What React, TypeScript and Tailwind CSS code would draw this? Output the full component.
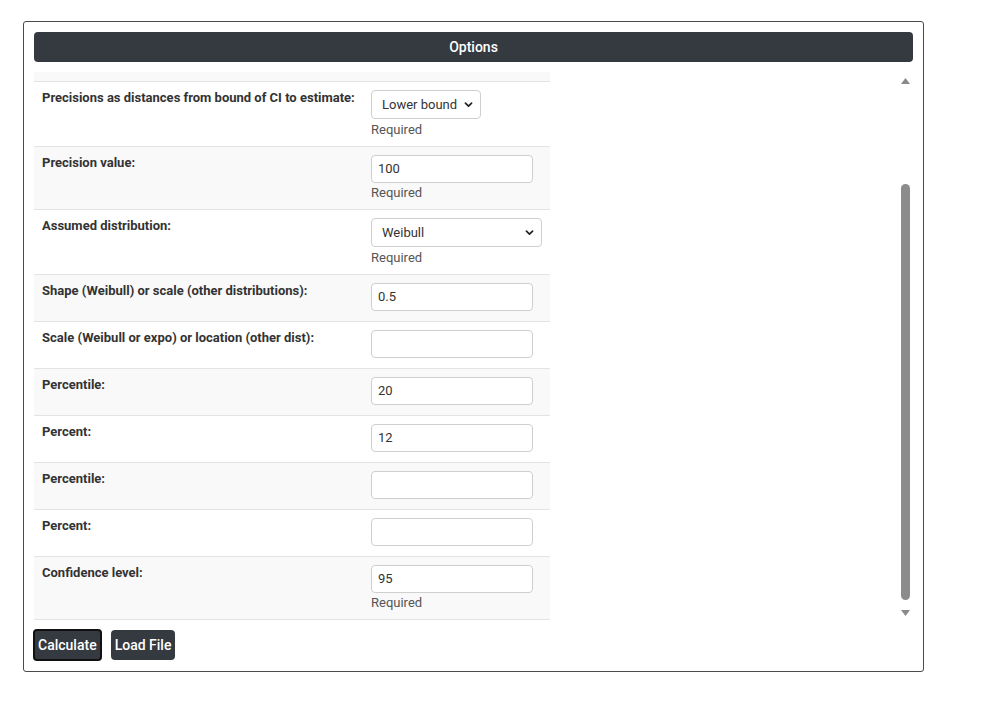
import React from 'react';

type Row = {
  label: string;
  kind: 'input' | 'select';
  value?: string;
  required?: boolean;
  selectWidth?: string;
};

const rows: Row[] = [
  { label: 'Precisions as distances from bound of CI to estimate:', kind: 'select', value: 'Lower bound', required: true, selectWidth: 'w-[110px]' },
  { label: 'Precision value:', kind: 'input', value: '100', required: true },
  { label: 'Assumed distribution:', kind: 'select', value: 'Weibull', required: true, selectWidth: 'w-[171px]' },
  { label: 'Shape (Weibull) or scale (other distributions):', kind: 'input', value: '0.5' },
  { label: 'Scale (Weibull or expo) or location (other dist):', kind: 'input', value: '' },
  { label: 'Percentile:', kind: 'input', value: '20' },
  { label: 'Percent:', kind: 'input', value: '12' },
  { label: 'Percentile:', kind: 'input', value: '' },
  { label: 'Percent:', kind: 'input', value: '' },
  { label: 'Confidence level:', kind: 'input', value: '95', required: true },
];

function Chevron() {
  return (
    <svg width="9" height="9" viewBox="0 0 16 16" fill="none">
      <path d="M2.5 5.5L8 11l5.5-5.5" stroke="#222" strokeWidth="3" strokeLinecap="round" strokeLinejoin="round" />
    </svg>
  );
}

function Field({ row }: { row: Row }) {
  if (row.kind === 'select') {
    return (
      <div className={`${row.selectWidth} h-[29px] mb-[1px] border border-[#cfcfcf] rounded-[4px] bg-white flex items-center justify-between pl-[10px] pr-[7px] text-[13px] text-[#333]`}>
        <span>{row.value}</span>
        <Chevron />
      </div>
    );
  }
  return (
    <div className="w-[162px] h-[28px] border border-[#cfcfcf] rounded-[4px] bg-white flex items-center px-[6px] text-[13px] text-[#333]">
      {row.value}
    </div>
  );
}

export default function App() {
  return (
    <div className="w-[987px] h-[702px] bg-white pt-[21px] pl-[23px]" style={{ fontFamily: 'Roboto, "Liberation Sans", sans-serif' }}>
      <div className="w-[901px] h-[651px] border border-[#4a4a4a] rounded-[3px] pt-[10px] px-[10px]">
        <div className="h-[30px] bg-[#343a40] rounded-[4px] flex items-center justify-center text-white text-[14px] font-medium">
          Options
        </div>

        <div className="mt-[10px] h-[548px] flex">
          <div className="flex-1 overflow-hidden">
            <div className="w-[516px]">
              <div className="h-[10px] bg-[#f9f9f9] border-b border-[#e3e3e3]" />
              {rows.map((row, i) => (
                <div
                  key={i}
                  className={`flex border-b border-[#e3e3e3] ${i % 2 === 1 ? 'bg-[#f9f9f9]' : 'bg-white'}`}
                >
                  <div className="w-[329px] pl-[8px] pt-[7px] text-[13px] font-bold text-[#333] leading-[17px]">
                    {row.label}
                  </div>
                  <div className="flex-1 pl-[8px] pt-[8px] pb-[10px]">
                    <Field row={row} />
                    {row.required && (
                      <div className="text-[13px] text-[#555] leading-[17px] pt-[1px] -mb-[2px]">Required</div>
                    )}
                  </div>
                </div>
              ))}
            </div>
          </div>

          {/* scrollbar */}
          <div className="w-[15px] flex flex-col items-center pt-[6px] pb-[4px]">
            <svg width="9" height="6" viewBox="0 0 9 6">
              <path d="M4.5 0L9 6H0z" fill="#8a8a8a" />
            </svg>
            <div className="flex-1 w-[9px] mt-[4px] mb-[4px] relative">
              <div className="absolute left-0 right-0 top-[96px] bottom-[6px] bg-[#8c8c8c] rounded-full" />
            </div>
            <svg width="9" height="6" viewBox="0 0 9 6">
              <path d="M0 0h9L4.5 6z" fill="#8a8a8a" />
            </svg>
          </div>
        </div>

        <div className="mt-[9px] flex gap-[9px] items-center">
          <button className="-ml-[1px] h-[32px] px-[3px] bg-[#343a40] text-white text-[14px] font-medium rounded-[4px] border-2 border-[#111]">
            Calculate
          </button>
          <button className="h-[30px] px-[4px] bg-[#343a40] text-white text-[14px] font-medium rounded-[4px]">
            Load File
          </button>
        </div>
      </div>
    </div>
  );
}
